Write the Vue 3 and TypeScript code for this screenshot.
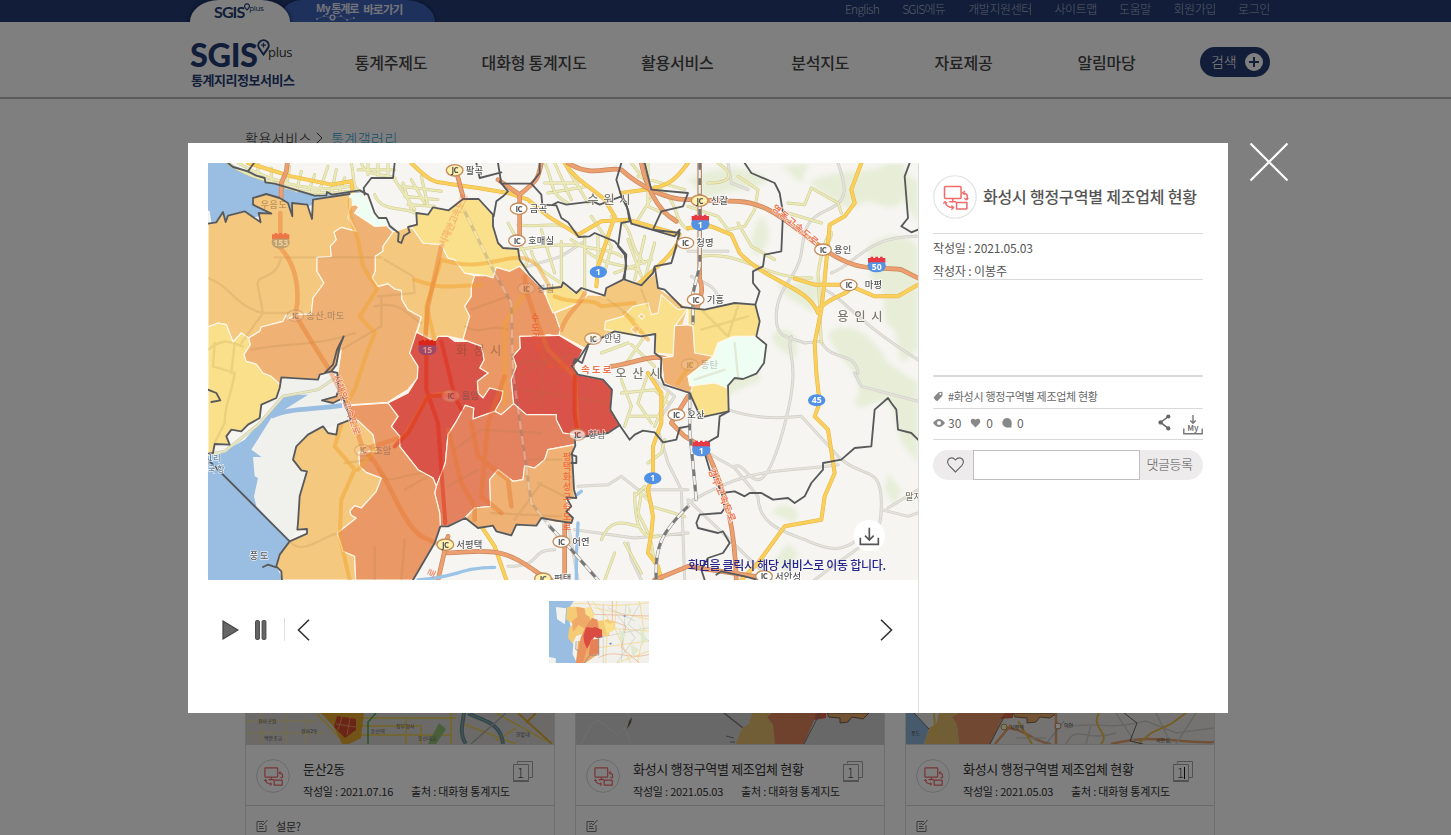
<script setup lang="ts">
interface Card { title: string; date: string; note: string; kind: number; caret: boolean }
interface Place { x: number; y: number; tag: string; name: string; o: number }
interface Shape { c: string; d: string }

const topMenu = [
  { t: 'English', w: 35 }, { t: 'SGIS에듀', w: 44 }, { t: '개발지원센터', w: 65 }, { t: '사이트맵', w: 43 },
  { t: '도움말', w: 32 }, { t: '회원가입', w: 43 }, { t: '로그인', w: 32 },
]
const nav = ['통계주제도', '대화형 통계지도', '활용서비스', '분석지도', '자료제공', '알림마당']
const cards: Card[] = [
  { title: '둔산2동', date: '2021.07.16', note: '설문?', kind: 0, caret: false },
  { title: '화성시 행정구역별 제조업체 현황', date: '2021.05.03', note: '', kind: 1, caret: false },
  { title: '화성시 행정구역별 제조업체 현황', date: '2021.05.03', note: '', kind: 2, caret: true },
]

/* Map drawing units: three per screen pixel. */
const regions: Shape[] = [
  { c: '#f5c87f', d: '0,182 25,178 45,147 53,177 60,158 110,145 158,178 152,150 190,152 135,125 135,105 175,93 215,105 240,120 253,160 252,120 298,125 312,168 315,110 425,93 425,130 420,165 445,205 400,193 378,208 385,230 367,250 370,280 327,283 327,325 348,360 315,405 310,453 265,455 240,468 235,455 225,475 160,492 155,505 122,525 100,510 75,537 55,485 30,480 0,492' },
  { c: '#fae08a', d: '0,492 30,480 55,485 75,537 100,510 122,525 127,545 108,575 115,595 145,603 165,630 190,640 215,665 217,675 205,705 160,725 155,765 120,785 100,805 70,800 55,820 65,845 20,843 15,870 0,872' },
  { c: '#efb174', d: '445,205 425,165 422,145 430,128 445,125 452,132 440,150 500,190 535,187 555,207 525,250 525,265 502,280 502,325 493,345 510,370 540,362 560,378 580,382 582,410 600,440 640,462 625,508 620,545 605,570 630,610 628,645 600,680 575,695 540,718 435,725 420,728 405,705 375,720 342,712 385,700 392,680 388,640 400,560 385,605 370,625 335,635 330,650 220,643 217,665 190,640 165,630 145,603 115,595 108,575 127,545 122,525 155,505 160,492 225,475 235,455 240,468 265,455 310,453 315,405 348,360 327,325 327,283 370,280 367,250 385,230 378,208 400,193' },
  { c: '#f5c87f', d: '555,207 600,192 615,197 645,240 700,245 720,285 740,290 770,330 800,338 790,370 790,400 770,430 785,460 765,530 720,520 700,520 680,535 628,508 640,462 600,440 582,410 580,382 560,378 540,362 510,370 493,345 502,325 502,280 525,265 525,250' },
  { c: '#fae08a', d: '608,187 627,180 625,150 660,155 675,133 722,142 765,108 812,108 855,155 855,190 870,240 885,255 930,258 935,290 955,320 935,310 905,325 865,313 855,345 835,338 770,330 740,290 720,285 700,245 645,240 615,197' },
  { c: '#ea9866', d: '800,338 835,338 855,345 865,313 905,325 935,310 960,335 1000,375 1020,410 1040,450 1057,500 1053,520 1020,515 990,522 935,520 937,555 915,580 925,610 910,650 917,722 880,755 860,745 885,685 845,675 825,705 810,690 808,655 840,630 815,615 828,590 820,550 780,535 765,530 785,460 770,430 790,400 790,370' },
  { c: '#f5c87f', d: '1040,450 1100,425 1140,395 1190,398 1195,375 1245,350 1300,367 1340,330 1350,375 1440,435 1420,500 1395,580 1340,570 1345,515 1300,520 1220,505 1130,555 1053,515 1057,500' },
  { c: '#fae08a', d: '1010,380 1065,360 1100,390 1120,375 1140,395 1100,425 1035,450 1018,410' },
  { c: '#fae08a', d: '1192,475 1245,460 1275,430 1320,420 1330,455 1350,450 1360,395 1410,440 1440,435 1400,490 1398,575 1342,570 1342,513 1290,515 1260,518 1230,505 1190,500' },
  { c: '#f5c87f', d: '1268,500 1282,487 1295,495 1285,515' },
  { c: '#f5c87f', d: '1292,460 1300,452 1310,460 1302,468' },
  { c: '#efb174', d: '1400,488 1455,485 1460,550 1515,580 1440,640 1455,680 1440,690 1368,660 1360,585 1395,580' },
  { c: '#fae08a', d: '1440,432 1490,440 1580,420 1642,425 1655,475 1645,520 1575,520 1530,540 1515,580 1460,570 1455,490 1440,485' },
  { c: '#effef3', d: '1645,520 1675,545 1668,600 1645,632 1605,648 1580,645 1560,668 1560,680 1445,668 1440,640 1515,585 1530,540 1575,522' },
  { c: '#fae08a', d: '1455,668 1520,660 1558,675 1562,745 1478,763 1445,695' },
  { c: '#effef3', d: '425,93 460,90 485,120 500,150 535,165 545,187 500,190 440,150 453,132 440,122 427,130' },
  { c: '#da5348', d: '625,508 680,535 690,520 720,520 740,535 780,535 820,550 828,590 815,615 840,630 808,655 810,690 825,705 845,675 885,685 880,710 860,745 795,768 797,735 772,727 745,775 720,815 712,900 685,970 675,945 630,920 575,850 575,820 550,790 570,760 540,720 600,690 628,645 630,610 605,570' },
  { c: '#da5348', d: '935,520 1053,517 1125,560 1110,590 1092,610 1110,635 1185,650 1212,680 1207,740 1235,787 1200,810 1110,825 1097,832 1100,815 1065,810 1045,770 1045,755 955,755 917,722 910,650 925,610 915,580 937,555' },
  { c: '#e48260', d: '720,815 745,775 772,727 797,735 795,768 860,745 880,755 917,722 955,755 1045,755 1045,770 1065,810 1100,815 1100,845 1020,860 1010,890 980,915 950,908 945,950 915,955 870,920 845,950 848,1030 800,1035 770,1065 720,1090 697,1090 695,1050 680,990 685,970 712,900' },
  { c: '#efb174', d: '1100,845 1020,860 1010,890 980,915 950,908 945,950 915,955 870,920 845,950 848,1030 800,1035 772,1065 810,1095 855,1088 865,1105 910,1117 925,1085 985,1088 1000,1065 1040,1078 1090,1080 1095,1065 1080,1045 1075,1005 1100,1010 1098,980 1092,880' },
  { c: '#f5c87f', d: '425,772 450,772 495,815 505,865 453,868 455,910 475,928 520,945 505,985 460,1035 440,1028 425,1045 430,1057 445,1065 388,1110 405,1165 440,1180 443,1251 222,1251 220,1225 205,1210 215,1175 245,1135 297,1112 297,1098 268,1100 270,1080 275,1000 297,925 280,922 255,890 265,850 300,815 345,790 360,810 385,815 390,785' },
  { c: '#ea9866', d: '420,728 540,720 570,760 550,790 575,820 575,850 630,920 675,945 685,970 680,990 695,1050 697,1090 680,1140 615,1251 443,1251 440,1180 405,1165 388,1110 445,1065 430,1057 425,1045 440,1028 460,1035 505,985 520,945 475,928 455,910 453,868 505,865 495,815 450,772 428,770' },
]
/* County boundary strokes */
const borders = [
  'M60 0L75 12L120 25L145 38L170 45L172 58L200 62L320 98L355 97L357 87L372 95L455 82L480 95L500 150L512 165L535 165L545 188L572 210L570 235L580 240L588 218L605 208L600 192L627 185L625 150L660 155L675 133L722 142L765 108L812 108L855 155L855 190L870 240L885 255L930 258L935 290L965 335L1005 378L1060 372L1065 358L1105 390L1120 375L1190 398L1195 375L1245 350L1255 310L1250 275L1230 250L1240 180L1265 175L1255 120L1240 100L1175 125L1155 115L1075 125L1050 117L1035 125',
  'M0 182L25 178L45 147L53 177L60 158L110 145L158 178L152 150L190 152L135 125L135 105L175 93L215 105L240 120L253 160L252 120L298 125L312 168L315 110L425 93',
  'M120 25L138 0M490 45L555 45L560 0M490 45L467 75L470 95M870 0L880 62L970 62L995 30L995 0M875 55L900 85L885 100L865 115L857 160M805 0L815 45L880 28M970 62L1000 95L1003 125L1045 127L1060 165L1080 178L1112 222L1145 220L1160 210L1220 235L1255 275L1250 350L1300 367L1335 330L1340 310L1390 300L1415 210L1335 200L1360 145L1425 130L1440 90L1330 80L1310 0M1240 0L1225 50L1240 100L1260 140L1270 182L1400 220L1415 200L1405 250L1390 300M1340 310L1350 375L1370 380L1420 430',
  'M1420 432L1490 440L1580 420L1642 425L1655 475L1645 520L1675 545L1668 600L1645 632L1605 648L1580 645L1560 668L1562 745L1478 763L1445 690L1368 665L1358 640L1360 585L1340 570L1342 513L1300 520L1220 505L1140 545L1110 590L1092 610L1110 635L1185 650L1212 680L1207 740L1235 787',
  'M1092 610L1102 588L1122 600L1140 550M1235 787L1200 810L1100 825L1102 848L1090 875L1105 880L1105 900L1090 900M1092 870L1098 980L1105 1005L1075 1003L1090 1030L1075 1045L1095 1065L1090 1080L1040 1072L1000 1065L985 1088L925 1085L910 1117L865 1105L855 1088L810 1095L772 1065L720 1090L697 1090L680 1140L615 1251',
  'M1235 787L1265 830L1280 815L1305 803L1340 808L1365 838L1405 830L1415 795L1440 790',
  'M1610 0L1630 30L1700 60L1715 90L1725 150L1720 265L1670 275L1665 310L1635 325L1635 360L1655 385L1642 425',
  'M1562 745L1535 760L1530 820L1495 840L1490 870L1505 920L1540 985L1550 1035L1540 1050L1475 1055L1465 1080L1470 1095L1530 1110L1545 1105L1565 1140L1545 1170L1500 1185L1480 1220L1490 1251M1540 990L1580 985L1610 1000L1625 990L1660 990L1695 1010L1740 1005L1760 1020L1790 1000L1810 960L1845 920L1845 900L1900 890L1940 855L1990 850L2000 740L2040 705L2050 720L2065 740L2070 800L2110 810L2130 830',
  'M1525 1235L1540 1225L1610 1240L1650 1251M2130 200L2110 208L2080 190L2100 165L2090 40L2105 0',
  'M342 712L385 700L392 680L388 630L370 625L335 635L330 650L220 643L215 675L205 705L160 725L155 765L120 785L100 805L70 800L55 820L65 845L20 843L15 870L0 872M342 712L375 720L405 705L428 770L390 785L385 815L360 810L345 790L300 815L265 850L255 890L280 922L297 925L275 1000L270 1080L268 1100L297 1098L297 1112L245 1135L215 1175L205 1210L220 1225L222 1251M205 1213L180 1205L165 1212M0 680L25 690L37 712L10 717M0 890L245 1135M370 625L385 605L395 550L407 520L387 560L375 605L350 630',
]
const palegreen = [
  'M1440 50C1520 0 1640 10 1680 50C1640 90 1560 70 1500 110Z', 'M1800 60C1880 10 1990 40 2040 0L2090 0L2080 120C2030 160 2000 90 1950 130C1890 150 1860 90 1800 60Z',
  'M1980 250C2050 190 2130 230 2130 260V560L2080 600L2060 500C2000 480 2060 380 1990 350Z', 'M1860 510C1920 460 2000 520 2040 600L2130 660V900L2080 840L2050 720C1990 700 1960 760 1940 720C1990 630 1880 600 1860 510Z',
  'M1490 560C1540 510 1580 600 1640 590L1660 650L1530 710Z', 'M1690 520C1730 470 1790 520 1760 590C1730 560 1710 570 1690 520Z', 'M1700 350C1760 390 1790 330 1850 350L1810 450C1780 410 1740 430 1700 350Z',
  'M1690 1050C1730 1000 1790 1040 1760 1080Z', 'M1700 1190L1740 1140L1770 1170L1740 1230Z', 'M2040 930L2080 980L2060 1030L2030 980Z', 'M1660 160C1700 200 1680 260 1640 280C1620 230 1640 190 1660 160Z', 'M1720 10L1800 0L1780 60Z', 'M2060 0L2130 60V180L2090 120Z',
]
const minor = [
  'M60 0C120 45 200 55 230 70S350 95 425 85M90 0C180 50 300 95 430 70M150 0V40M190 15V60M245 10L235 75M280 25L265 85M320 35L300 90M360 10L330 95M385 20L370 90M410 45L395 85M430 0C440 40 430 80 460 85M460 0C470 40 520 30 560 45M480 0V35M510 0V40M540 0V35M450 20H560M500 95C520 150 590 130 620 150M560 50L620 140M585 60L610 140M610 50L650 120M640 40L660 130M580 70L700 85M590 100L690 110M600 125L680 130',
  'M900 180L960 290L940 340M930 185C1010 200 1060 160 1110 220M1000 200L1040 330M930 260C1000 250 1060 240 1130 250M1060 235V370M970 265C990 340 1050 340 1080 380M1130 220V390M1090 230C1140 270 1200 250 1240 280M1170 220V300M1130 260C1190 310 1230 300 1290 320M1010 0C1040 60 1020 90 1080 120M1040 0L1090 110M1080 20L1140 120M1010 60H1110M1020 90L1140 70M1150 160L1210 250L1190 330M1210 160C1290 190 1250 240 1310 300M1260 230L1300 340M1310 220L1280 350M1340 240L1310 350M1220 330L1330 290M1270 0L1340 90L1290 170M1320 0V130L1410 170M1290 40L1430 80M1340 70C1420 110 1390 170 1440 200',
  'M1440 130L1530 160L1560 200L1610 190L1640 140L1650 80L1590 40M1530 0C1590 40 1560 60 1500 60M1590 180L1630 250L1700 290M1480 280C1590 260 1680 350 1810 345M1740 120L1790 125L1810 75L1890 120L1900 150M1740 150L1840 180M1860 240C1890 180 1850 200 1830 330L1840 540',
  'M1240 650L1270 730L1250 790M1320 630L1290 720L1330 780M1240 690L1340 680L1380 720M1260 760H1360M1380 690L1340 790M1255 600L1310 520M1180 570L1260 540M1270 545L1340 610',
  'M1330 1020L1300 990L1290 1050L1320 1110M1280 1000L1310 970L1330 1030M1320 900L1360 870L1370 830M1180 1130C1210 1060 1250 1080 1290 1090M1330 1030L1430 1060M1250 1140L1300 1230M1330 1140L1340 1200M1280 990C1280 1090 1300 1130 1350 1120M1190 1251L1220 1170',
]
const greyRoads = [
  'M1890 0C1910 60 1930 110 1860 140S1790 200 1780 270S1710 370 1705 450S1740 520 1790 540L1840 535C1870 600 1940 560 1950 630M1440 265H1560M1850 380C1900 400 1950 480 2130 590M1870 330C1950 300 1970 220 2130 220M1750 520C1730 580 1790 580 1720 820S1620 890 1580 910M1560 740C1620 760 1680 770 1780 760L1890 880C1960 950 2020 900 2020 1020S2000 1110 1820 1251M1500 870L1580 915L1650 1000C1650 1090 1740 1110 1790 1130S1900 1190 1980 1100M1440 1020C1640 900 1740 930 1890 905M1440 1010L1690 1251M2020 1040L2100 1060L2130 1050M2040 1035L2130 980M1940 630L1960 670L2130 715',
  'M1110 970L1200 965L1240 940L1290 980H1440M1100 1100L1280 1125L1440 1110M1350 800L1380 900L1420 980L1430 1251M1340 650L1400 700L1360 760M900 1210C1010 1210 960 1160 1040 1160M1260 1140L1270 1190L1300 1251M1110 1251L1080 1080M960 310L1060 280L1130 235M1450 340C1490 360 1540 370 1530 430M1560 0L1570 60L1620 80',
]
const yellowRoads = [
  'M120 0L250 40L370 65L430 55L435 95M610 0C680 70 690 55 720 62L810 75L900 90L960 110L1020 160L1110 215L1180 175L1260 170L1330 190L1415 215M1070 0C1100 50 1160 80 1190 110L1220 160L1170 310L1165 370M1240 90L1310 80C1390 70 1410 40 1440 0M1415 230C1390 280 1350 310 1260 390',
  'M1440 195L1510 190L1570 215L1595 270C1680 360 1800 370 1830 450M1960 0L1930 80L1940 120L1910 160L1865 185L1850 350L1840 440L1820 540L1825 630L1835 720L1820 760L1860 800L1880 930L1850 1000L1840 1070L1730 1090L1650 1200L1600 1251M1760 347L1820 365H1900M1830 440C1880 390 1920 400 1930 370L2000 400L2070 400L2130 365',
  'M1320 630L1360 690V780L1335 850V930L1320 980L1335 1060L1330 1110L1320 1170L1350 1210L1360 1251M800 1060L860 1150L895 1251',
]
const orangeRoads = [
  'M238 0L235 25L220 60L217 230', 'M745 25L765 100M870 50L935 95V235M935 95C990 50 990 50 1000 0M1080 0C1150 45 1200 10 1240 20C1290 65 1370 110 1440 110L1590 115C1690 120 1750 190 1850 260S2000 310 2080 320L2130 345',
  'M1475 0V350C1500 400 1440 450 1465 520M1300 0C1310 50 1340 140 1405 175M1440 700L1390 780L1430 820L1495 860C1560 1000 1580 1100 1585 1251M1210 610C1280 600 1340 570 1380 590L1440 605',
  'M720 1170C870 1160 890 1160 990 1230L1030 1251M1070 1251V1080M690 1251L720 1120M1340 1251L1440 1210L1640 1240',
]
/* Roads showing through the shaded districts */
const innerYellow = [
  'M425 110L427 165L450 230L465 310L507 378L455 460L500 510L480 560L440 680L420 715M620 350C700 380 720 370 820 365M700 290L655 430V510M700 290C850 340 920 240 990 310L1030 380M655 430L680 530M1040 400C1110 430 1150 400 1180 430L1280 420M950 390L890 480L890 720M400 785L380 850L440 920L400 1010L395 1120L425 1251M450 920L500 860M1250 450L1320 530M1450 600L1410 660',
]
const innerOrange = ['M217 150V255C250 290 272 340 268 420L262 455L310 535L370 630L430 750L465 860C540 920 570 1070 640 1120L690 1143M700 250L660 430L650 540M950 340L955 385L980 460L1020 560L1100 640L1110 810M1130 390C1110 440 1080 440 1060 500M465 860L590 820L660 700L720 690M880 1050L820 1000L840 780L890 640M720 800L760 960L800 1030V1070M790 780L810 880L900 950L910 1030']
const innerRed = ['M655 535V680L690 780L700 920L712 1080M700 535L740 700L760 740M560 850L600 810L660 700L740 695M1100 640V750L1110 815']
const innerPale = ['M200 283H520M220 283C200 360 140 330 150 370L165 450L100 540M0 345C70 370 80 430 165 450H260M510 400L620 390L615 340L530 290M500 430C580 410 600 460 640 480M520 400V490L400 560M0 560C50 520 70 540 105 550M20 540L15 610L80 630M80 540L70 630M130 560C230 540 330 550 440 510M80 630C70 700 50 720 50 780L20 840M770 490C820 520 850 480 900 500M790 440L900 400M930 650C970 600 1040 580 1060 620M1010 530L1000 750M960 720L1050 650M740 860L820 800L1000 810M720 970L810 920M960 890H1060M990 960L1070 1000M850 1050L1060 1060M920 1070L1000 960M590 980L660 940M510 920C550 980 560 930 660 930M250 1140C290 1180 350 1110 400 1110M500 1150V1251M590 1130L580 1251M410 900L490 890M930 600L1100 580M940 680L1080 700M1080 700L1200 720M1480 440L1560 520M1590 430L1560 520M1480 500L1620 460M1200 410L1280 470M1300 380L1320 430M1460 650L1550 620M1580 540L1590 640']
const rails = [
  { d: 'M770 145L860 330L910 420L915 630L970 1020L1025 1090', o: 0.28 },
  { d: 'M1025 1090L1090 1160L1170 1251', o: 1 },
  { d: 'M1475 0V310L1455 390V480', o: 1 },
  { d: 'M1445 690V800L1465 1010M1440 1030C1360 1110 1340 1150 1345 1251', o: 1 },
]
const places: Place[] = [
  { x: 740, y: 22, tag: 'JC', name: '팔곡', o: 1 }, { x: 932, y: 137, tag: 'IC', name: '금곡', o: 1 }, { x: 927, y: 233, tag: 'IC', name: '호매실', o: 1 },
  { x: 955, y: 377, tag: 'IC', name: '봉담', o: 0.4 }, { x: 1155, y: 527, tag: 'IC', name: '안녕', o: 0.8 }, { x: 1475, y: 113, tag: 'JC', name: '신갈', o: 1 },
  { x: 1432, y: 240, tag: 'IC', name: '청명', o: 1 }, { x: 1845, y: 260, tag: 'IC', name: '용인', o: 1 }, { x: 1922, y: 366, tag: 'IC', name: '마평', o: 1 },
  { x: 1463, y: 410, tag: 'IC', name: '기흥', o: 1 }, { x: 262, y: 458, tag: 'IC', name: '송산.마도', o: 0.4 }, { x: 1445, y: 605, tag: 'IC', name: '동탄', o: 0.3 },
  { x: 465, y: 862, tag: 'IC', name: '조암', o: 0.4 }, { x: 728, y: 699, tag: 'IC', name: '율암', o: 0.5 }, { x: 1108, y: 815, tag: 'IC', name: '향남', o: 0.65 },
  { x: 1405, y: 755, tag: 'IC', name: '오산', o: 1 }, { x: 712, y: 1145, tag: 'JC', name: '서평택', o: 1 }, { x: 1060, y: 1136, tag: 'IC', name: '어연', o: 1 },
  { x: 1005, y: 1247, tag: 'JC', name: '평택', o: 1 }, { x: 1668, y: 1240, tag: 'IC', name: '서안성', o: 1 },
]
const nameGap = (p: Place) => (p.name === '마평' ? 48 : 33)
const nameLength = (p: Place) => (p.name === '송산.마도' ? 114 : p.name.length * 26)
const ovals = [{ x: 1171, y: 327, n: '1' }, { x: 1334, y: 946, n: '1' }, { x: 1826, y: 712, n: '45' }]
const shields = [
  { x: 218, y: 235, n: '153', a: '#ee7546', b: '#c0a06f', t: '#efd0a0' }, { x: 658, y: 555, n: '15', a: '#dc2418', b: '#9c4868', t: '#e3948e' },
  { x: 1477, y: 180, n: '1', a: '#e63946', b: '#5592e4', t: '#fff' }, { x: 2006, y: 306, n: '50', a: '#e63946', b: '#5592e4', t: '#fff' }, { x: 1480, y: 858, n: '1', a: '#e63946', b: '#5592e4', t: '#fff' },
]
</script>

<template>
  <div class="screen">
    <svg class="defs" width="0" height="0" aria-hidden="true">
      <defs>
        <symbol id="device" viewBox="0 0 34 34">
          <g fill="none" stroke="#f06b6b" stroke-width="1.2">
            <rect x="8.9" y="8.9" width="12.8" height="9.3" rx=".8" /><path d="M12.5 20.6H18M15.3 18.2V20.6" />
            <rect x="18.2" y="21.2" width="8" height="5" rx=".3" />
            <path d="M23.2 13.7C26.6 14.2 27.3 16.5 25.9 19M9.4 20.7C9.7 23.6 11.5 25 15.6 25.2" />
            <path d="M24.7 12.3L22.9 13.7L24.5 15.4M24.1 18L25.8 19.3L27.3 17.8M14.2 23.6L15.9 25.2L14.2 26.8M8 22L9.3 20.5L10.9 21.8" stroke-width="1" />
          </g>
        </symbol>
      </defs>
    </svg>

    <div class="page">
      <div class="topbar">
        <div class="wrap">
          <div class="tabs">
            <div class="tab white"><b>SGIS</b><svg width="6" height="8" viewBox="0 0 8 10"><path d="M4 9L1.2 5.5A3.2 3.2 0 1 1 6.8 5.5Z" fill="none" stroke="#223a72" stroke-width="1.5" /></svg><i>plus</i></div>
            <div class="tab blue">
              <em>My</em><strong>통계로</strong><span>바로가기</span>
              <svg class="dots" width="40" height="7" viewBox="0 0 40 7"><path d="M1 5L8 2L16 4L25 2L31 6L38 4" fill="none" stroke="#9fb2de" stroke-width=".6" /><g fill="#c8d2ee"><circle cx="1" cy="5" r="1" /><circle cx="8" cy="2" r="1" /><circle cx="25" cy="2" r="1" /><circle cx="31" cy="6" r="1" /><circle cx="38" cy="4" r="1" /></g><circle cx="16.5" cy="3.5" r="2.4" fill="none" stroke="#e3e8f5" stroke-width="1.4" /></svg>
            </div>
          </div>
          <div class="topmenu"><a v-for="m in topMenu" :key="m.t" :style="{ width: m.w + 'px' }">{{ m.t }}</a></div>
        </div>
      </div>
      <header class="header">
        <div class="wrap">
          <div class="logo">
            <div class="mark"><b>SGIS</b><svg width="13" height="17" viewBox="0 0 13 17"><path d="M6.5 15.5L2.2 9.4A5.2 5.2 0 1 1 10.8 9.4Z" fill="none" stroke="#223a72" stroke-width="2" /><path d="M6.5 3.8V8.6M4.1 6.2H8.9" stroke="#223a72" stroke-width="1.3" /></svg><i>plus</i></div>
            <div class="sub">통계지리정보서비스</div>
          </div>
          <nav class="nav"><a v-for="n in nav" :key="n">{{ n }}</a></nav>
          <button class="search"><span>검색</span><svg width="18" height="18" viewBox="0 0 18 18"><circle cx="9" cy="9" r="9" fill="#fff" /><path d="M9 4V14M4 9H14" stroke="#223a72" stroke-width="2" /></svg></button>
        </div>
      </header>
      <main class="content">
        <div class="crumb"><span>활용서비스</span><svg width="7" height="12" viewBox="0 0 7 12"><path d="M.8.8L6 6L.8 11.2" fill="none" stroke="#444" /></svg><span class="here">통계갤러리</span></div>
        <div class="cards">
          <article v-for="(c, i) in cards" :key="i" class="card">
            <svg v-if="c.kind === 0" class="strip" viewBox="0 0 308 31">
              <rect width="308" height="31" fill="#d8d5d0" />
              <path d="M0 8H70M0 20H80M15 0V31M40 0V31M60 5V31" stroke="#e5d9a0" stroke-width="1.5" />
              <g fill="none" stroke="#e5cf68" stroke-width="2"><path d="M70 0L100 31M115 5H210M115 22H205M115 13H175V31M160 5V31M205 0V31M250 0L300 28M215 10L270 31M270 15L250 28" /></g>
              <path d="M75 0H118L115 25L103 31H96L88 14Z" fill="#e4a832" /><path d="M91 3L110 6V17L99 25L88 14Z" fill="#d64b2e" /><path d="M96 4L92 17M104 5L101 22M90 11L110 14" stroke="#efad68" stroke-width=".8" />
              <path d="M130 0L122 9V31" fill="none" stroke="#4eab55" stroke-width="1.5" /><path d="M193 10L200 16L190 31H182Z" fill="#92bd74" />
              <path d="M220 31C212 20 218 5 218 0M222 0C235 8 255 8 257 31" fill="none" stroke="#648caf" stroke-width="4" /><path d="M220 31C212 20 218 5 218 0M222 0C235 8 255 8 257 31" fill="none" stroke="#9ab968" stroke-width="1" />
              <path d="M225 31L260 0" stroke="#aaa" stroke-width="1.5" /><path d="M272 0L306 31M280 10L290 0" stroke="#dcaa35" stroke-width="2" />
              <g fill="#555" font-size="5"><text x="12" y="10">갈마공원</text><text x="55" y="20">갈마2동</text><text x="18" y="27">백운초교</text><text x="125" y="20">둔산역</text><text x="150" y="15">정부청사</text><text x="172" y="27">둔산대교</text><text x="270" y="23">한밭대</text></g>
            </svg>
            <svg v-else-if="c.kind === 1" class="strip" viewBox="0 0 308 31">
              <rect width="308" height="31" fill="#d1d1d1" /><path d="M5 31L15 12L22 7L42 22L48 14L55 30M50 0L54 4" fill="none" stroke="#dedede" />
              <path d="M53 8L56 4L55 10L51 16" fill="#6b5a4c" /><path d="M148 0L167 15" stroke="#777" stroke-width="1.5" />
              <path d="M176 0L173 11L166 15L160 31H199L197 12L191 4L196 0Z" fill="#e5bd6c" /><path d="M196 0L191 4L197 12L199 31H228L239 5L243 0Z" fill="#df855a" /><path d="M240 0L238 7L250 5V0Z" fill="#d86549" /><path d="M251 0L253 4L264 5V10L272 9L276 4L287 6L293 0Z" fill="#e5a666" stroke="#715b4a" />
              <path d="M228 31L244 0M150 23L158 25M154 29H159" stroke="#777" />
            </svg>
            <svg v-else class="strip" viewBox="0 0 308 31">
              <rect width="308" height="31" fill="#e9e7e3" /><path d="M0 0H8L23 16L18 31H0Z" fill="#8db4d8" />
              <path d="M33 0L30 11L23 15L18 31H53L51 12L46 4L53 0Z" fill="#e5bd6c" /><path d="M53 0L46 4L51 12L53 31H84L96 6L99 0Z" fill="#e29165" /><path d="M99 0L94 6L107 5V0Z" fill="#d86549" /><path d="M107 0L109 4L121 5V10L130 9L134 4L144 5L151 0Z" fill="#e5a666" stroke="#7f6549" />
              <path d="M8 0L23 16M84 31L98 4" stroke="#666" />
              <g fill="none" stroke="#e0a06d" stroke-width="2.5"><path d="M96 15C120 14 125 29 145 31M89 31L105 12M150 0V31M205 31C250 20 270 31 308 29" /></g><g fill="none" stroke="#cccbc2" stroke-width="1.5"><path d="M160 14C190 8 200 18 240 8L270 20L308 15M210 0L230 31M110 25H140M180 31L185 12M250 0L265 31M290 0L270 31M160 31C170 10 180 30 210 20" /></g>
              <g fill="none" stroke="#e7bd4b" stroke-width="2"><path d="M112 8L126 31M193 0C184 15 205 20 195 31M280 0L265 11L245 20L232 31M28 0L30 31" /></g><path d="M218 0L231 10L224 28L237 31" fill="none" stroke="#666" /><path d="M140 31L158 8" stroke="#8bb3d4" />
              <g fill="#444" font-size="5"><text x="104" y="16">서평택</text><text x="158" y="14">어연</text><text x="250" y="29">서안성</text><text x="5" y="22">풍도</text></g><circle cx="98" cy="14" r="3" fill="#fff3bc" stroke="#aa8c5c" /><circle cx="152" cy="13" r="3" fill="#fff" stroke="#c98054" />
            </svg>
            <div class="info">
              <svg class="round" width="34" height="34"><circle cx="17" cy="17" r="16.4" fill="none" stroke="#d6d6d6" /><use href="#device" width="34" height="34" /></svg>
              <div class="texts"><h3>{{ c.title }}</h3><p><span>작성일 : {{ c.date }}</span><span>출처 : 대화형 통계지도</span></p></div>
              <svg class="pages" width="22" height="23" viewBox="0 0 22 23"><path d="M5.5 3.5V1.5H20.5V17.5H17M1.5 4.5H16.5V20.5H1.5Z" fill="none" stroke="#a3a3a3" /><path d="M1 21.5H17" stroke="#a3a3a3" /><text x="8.5" y="17.5" text-anchor="middle" font-size="13" font-weight="300" fill="#555">1</text><path v-if="c.caret" d="M12.5 7V19" stroke="#111" /></svg>
            </div>
            <div class="note"><svg width="12" height="14" viewBox="0 0 12 14"><path d="M8 2.5H1V12.5H10V6M3 5H5M3 7.5H7M3 9.5H8M5 4L7 6L11.5 1" fill="none" stroke="#777" /></svg><span>{{ c.note }}</span></div>
          </article>
        </div>
      </main>
    </div>

    <div class="dim">
      <section class="modal">
        <div class="viewer">
          <svg class="map" viewBox="0 0 2130 1251">
            <defs><filter id="soft"><feGaussianBlur stdDeviation="8" /></filter></defs>
            <rect width="2130" height="1251" fill="#f6f5f2" />
            <g fill="#e2ebcf" opacity=".75" filter="url(#soft)"><path v-for="(d, i) in palegreen" :key="i" :d="d" /></g>
            <path d="M0 0H60L120 25L170 48L320 98L460 84L500 150L545 187L575 215L535 190L495 175L455 115L425 93L300 130L0 190Z" fill="#99bee1" />
            <path d="M0 143V180L10 178L5 143Z" fill="#f2f2ee" />
            <path d="M215 640L330 655L375 630L395 690L345 708L405 705L425 770L390 785L300 815L255 890L297 925L270 1100L245 1133L140 1030L138 950L132 860L190 765L210 720L160 725Z" fill="#f0f0ed" />
            <path d="M0 875L40 870L110 830L230 695H300L190 765L130 860L160 882H135L140 940L150 945L138 1000L145 1030L245 1135L205 1210L225 1251H0ZM0 665L25 690L37 712L0 725Z" fill="#99bee1" />
            <path d="M0 875L50 865L150 785L225 700L330 680L390 640" fill="none" stroke="#cbc9a4" stroke-width="9" />
            <path d="M0 875L50 865L150 785L225 700L330 680L390 640" fill="none" stroke="#e6e5c6" stroke-width="6" />
            <path d="M190 760C240 735 320 740 402 727" fill="none" stroke="#99bee1" stroke-width="14" />
            <g fill="none" stroke-linejoin="round" stroke-linecap="round">
              <g stroke="#d0cfc7" stroke-width="9"><path v-for="(d, i) in greyRoads" :key="i" :d="d" /></g>
              <g stroke="#e4e2da" stroke-width="5"><path v-for="(d, i) in greyRoads" :key="i" :d="d" /></g>
              <g stroke="#cfcb91" stroke-width="9"><path v-for="(d, i) in minor" :key="i" :d="d" /></g>
              <g stroke="#ebe9b8" stroke-width="6"><path v-for="(d, i) in minor" :key="i" :d="d" /></g>
              <g stroke="#e7b445" stroke-width="12"><path v-for="(d, i) in yellowRoads" :key="i" :d="d" /></g>
              <g stroke="#fad05c" stroke-width="9"><path v-for="(d, i) in yellowRoads" :key="i" :d="d" /></g>
              <g stroke="#c9865c" stroke-width="14"><path v-for="(d, i) in orangeRoads" :key="i" :d="d" /></g>
              <g stroke="#ec9f6f" stroke-width="10"><path v-for="(d, i) in orangeRoads" :key="i" :d="d" /></g>
              <path d="M1105 1251V1180L1110 1080M1100 1000L1120 985M630 1251C760 1240 750 1215 860 1213" stroke="#9bc3e6" stroke-width="10" />
            </g>
            <g stroke="#fff8ea" stroke-width="3.5" stroke-linejoin="round"><polygon v-for="(r, i) in regions" :key="i" :points="r.d" :fill="r.c" /></g>
            <g fill="none" stroke-linejoin="round" stroke-linecap="round">
              <g stroke="#9f7b40" stroke-width="7" opacity=".16"><path v-for="(d, i) in innerPale" :key="i" :d="d" /></g>
              <g stroke="#f2a32d" stroke-width="12" opacity=".5"><path v-for="(d, i) in innerYellow" :key="i" :d="d" /></g>
              <g stroke="#e8752b" stroke-width="14" opacity=".42"><path v-for="(d, i) in innerOrange" :key="i" :d="d" /></g>
              <g stroke="#e02610" stroke-width="12" opacity=".45"><path v-for="(d, i) in innerRed" :key="i" :d="d" /></g>
              <g v-for="(r, i) in rails" :key="'r' + i" :opacity="r.o"><path :d="r.d" stroke="#888" stroke-width="10" /><path :d="r.d" stroke="#f3f1ec" stroke-width="7" /><path :d="r.d" stroke="#777" stroke-width="8" stroke-dasharray="20 26" stroke-linecap="butt" /></g>
              <g stroke="#58595b" stroke-width="5.5"><path v-for="(d, i) in borders" :key="i" :d="d" /></g>
            </g>
            <g class="roadname" fill="#ee744e" stroke="#fff" stroke-width="3" paint-order="stroke" font-size="28">
              <text transform="translate(1690 138) rotate(40)" textLength="170">영동고속도로</text><text transform="translate(1500 922) rotate(67)" textLength="170">경부고속도로</text>
              <text transform="translate(1120 630)" textLength="90">속도로</text><text transform="translate(375 640) rotate(70)" textLength="190" opacity=".7">서해안고속도로</text>
            </g>
            <g class="roadname" fill="#ee552e" font-size="26" opacity=".65">
              <text v-for="(ch, i) in ['수','도','권','제','2','순','환','고']" :key="i" :x="[970,970,972,980,998,1018,1049,1080][i]" :y="[475,505,535,565,590,612,620,624][i]">{{ ch }}</text>
              <text v-for="(ch, i) in ['평','택','화','성','고','속','도','로']" :key="'b' + i" x="1065" :y="892 + i * 30">{{ ch }}</text>
              <text transform="translate(710 250) rotate(-65)" opacity=".5">서해안고속도로</text><text transform="translate(675 1245) rotate(-65)">로</text>
            </g>
            <g class="city"><text x="1138" y="124" textLength="130">수원시</text><text x="1888" y="475" textLength="136">용인시</text><text x="1222" y="646" textLength="136">오산시</text><text x="744" y="575" textLength="136" class="under">화성시</text><text x="158" y="136" textLength="78" class="under" font-size="27">우음도</text><text x="125" y="1188" textLength="56" font-size="27" fill="#555">풍도</text><text x="2092" y="1012" font-size="27">말지</text><text x="0" y="895" textLength="38" font-size="25" fill="#62839f">1리</text><text x="0" y="928" textLength="50" font-size="25" fill="#62839f">국항</text></g>
            <g v-for="(p, i) in places" :key="'p' + i" class="place" :class="{ faint: p.o < .6 }" :opacity="p.o">
              <ellipse :cx="p.x" :cy="p.y" rx="25" ry="17" :fill="p.tag === 'JC' ? '#fff2ae' : '#fff'" :fill-opacity="p.o < .6 ? .4 : 1" stroke="#c48b5b" stroke-width="4" />
              <text class="tag" :x="p.x" :y="p.y + 9" text-anchor="middle">{{ p.tag }}</text>
              <text class="nm" :x="p.x + nameGap(p)" :y="p.y + 10" :textLength="nameLength(p)">{{ p.name }}</text>
            </g>
            <g v-for="(o, i) in ovals" :key="'o' + i" class="num"><ellipse :cx="o.x" :cy="o.y" rx="26" ry="18" fill="#4f91e6" /><text :x="o.x" :y="o.y + 9" fill="#fff">{{ o.n }}</text></g>
            <g v-for="(s, i) in shields" :key="'s' + i" class="num"><path :d="`M${s.x - 26} ${s.y - 21}h8v-4h8v4h6v-4h8v4h6v-4h8v4h8v15h-52Z`" :fill="s.a" /><path :d="`M${s.x - 24} ${s.y - 8}h48q8 14 -4 25q-22 10 -40 0q-12 -11 -4 -25Z`" :fill="s.b" /><text :x="s.x" :y="s.y + 15" :fill="s.t">{{ s.n }}</text></g>
            <circle cx="1984" cy="1118" r="47" fill="#fff" /><path d="M1957 1124V1144H2011V1124M1984 1094V1130M1971 1118L1984 1131L1997 1118" fill="none" stroke="#555" stroke-width="5" />
            <text class="hint" x="1440" y="1222" textLength="594">화면을 클릭시 해당 서비스로 이동 합니다.</text>
          </svg>
          <div class="controls">
            <svg width="17" height="20" viewBox="0 0 17 20"><path d="M1 1L16 10L1 19Z" fill="#666" stroke="#444" stroke-width="1.2" /></svg>
            <svg class="pause" width="12" height="20" viewBox="0 0 12 20"><g fill="#666" stroke="#444"><rect x=".6" y=".6" width="3.8" height="18.8" rx="1" /><rect x="7.1" y=".6" width="3.8" height="18.8" rx="1" /></g></svg>
            <i class="bar"></i>
            <svg class="prev" width="13" height="22" viewBox="0 0 13 22"><path d="M12 .8L1.5 11L12 21.2" fill="none" stroke="#333" stroke-width="1.6" /></svg>
            <svg class="thumb" viewBox="0 0 221 186" preserveAspectRatio="none">
              <rect width="221" height="186" fill="#f1f0eb" /><path d="M0 0H55L40 30L50 90L60 186H0Z" fill="#99bee1" /><path d="M15 18L38 22L35 70L18 55ZM55 105L65 112L60 145L62 186L52 160ZM0 186V168L15 172V186Z" fill="#f2f2ee" />
              <g fill="none" stroke="#f5d788" stroke-width="2"><path d="M50 10C90 0 110 25 221 5M95 0L130 50L125 186M100 20L221 55M150 0L145 80L180 186M200 0L210 90L195 186M110 140L221 120M150 186L221 150M110 80L221 90" /></g>
              <g fill="none" stroke="#eba27b" stroke-width="1.5"><path d="M85 0L100 40L221 45M140 0V60L170 75L160 140L200 186M110 170C150 140 170 180 221 160" /></g>
              <g fill="none" stroke="#bfc4b7" stroke-width="1.3"><path d="M120 10V186M150 40L190 110L150 186M170 10L160 180M110 110L221 80M130 20L190 60M200 10L175 70L221 120" /></g>
              <g fill="#dfe9cd"><path d="M175 10L182 30L176 50ZM155 85L170 100L158 130ZM200 70L215 115L205 135ZM180 130L198 145L185 170Z" /></g>
              <path d="M40 18L64 17L80 22L84 45L90 47L108 60L119 58L130 55L145 64L145 82L133 90L133 105L120 105L115 85L95 90L60 105L52 128L42 110L45 80L54 70L38 55Z" fill="#f5cb75" />
              <path d="M82 20L92 18L100 45L92 60L84 45Z" fill="#fae08a" />
              <path d="M60 18L78 22L80 40L90 48L92 75L78 82L65 72L53 92L51 60L63 48ZM64 120H90L108 160L80 186H60Z" fill="#efaa69" /><path d="M95 50L107 56L110 85L82 90L88 120L75 186H59L70 110L80 80Z" fill="#ea925e" />
              <path d="M82 79L97 80L102 78L117 86L118 108L108 112L100 108L94 120L84 143L78 125L76 105Z" fill="#da4b42" /><path d="M92 116L110 113V158L88 162Z" fill="#e58257" /><path d="M119 55L132 68L145 65L142 90L130 95V108" fill="#fae08a" /><path d="M110 104V162L90 163L78 186M60 120L59 145L66 150M119 107L110 110" fill="none" stroke="#777" stroke-width="1.5" />
              <circle cx="167" cy="45" r="2.5" fill="#697fd2" /><circle cx="136" cy="128" r="2.5" fill="#697fd2" />
            </svg>
            <svg class="next" width="13" height="22" viewBox="0 0 13 22"><path d="M1 .8L11.5 11L1 21.2" fill="none" stroke="#333" stroke-width="1.6" /></svg>
          </div>
        </div>
        <aside class="side">
          <div class="head"><svg width="44" height="44" viewBox="0 0 34 34"><circle cx="17" cy="17" r="16.4" fill="none" stroke="#e2e2e2" stroke-width=".9" /><use href="#device" width="34" height="34" /></svg><h2>화성시 행정구역별 제조업체 현황</h2></div>
          <div class="who"><p>작성일 : 2021.05.03</p><p>작성자 : 이봉주</p></div>
          <div class="blank"></div>
          <div class="tags"><svg width="10" height="11" viewBox="0 0 10 11"><path d="M.5 6.5L5.5 1.3L9.3.7L9.5 4.7L4.2 10.2Q2 9.5.5 6.5Z" fill="#888" /><circle cx="7.3" cy="2.9" r="1" fill="#fff" /></svg><span>#화성시 행정구역별 제조업체 현황</span></div>
          <div class="stats">
            <svg width="12" height="8" viewBox="0 0 12 8"><path d="M0 4Q6-3.8 12 4Q6 11.8 0 4Z" fill="#888" /><circle cx="6" cy="4" r="2" fill="#fff" /></svg><span class="n1">30</span>
            <svg width="11" height="10" viewBox="0 0 10 10"><path d="M5 9.5L1 5.5Q-.8 2.6 1.4 1Q3.5 0 5 1.7Q6.5 0 8.6 1Q10.8 2.6 9 5.5Z" fill="#888" /></svg><span class="n2">0</span>
            <svg width="10" height="10" viewBox="0 0 10 10"><circle cx="5" cy="4.8" r="4.7" fill="#888" /><path d="M5 9.5H9.5V5Z" fill="#888" /></svg><span class="n2">0</span>
            <svg class="share" width="13" height="17" viewBox="0 0 13 17"><path d="M10.3 2.5L2.6 8.4L10.3 14.4" fill="none" stroke="#666" stroke-width="1.5" /><g fill="#666"><circle cx="10.3" cy="2.5" r="2.1" /><circle cx="2.6" cy="8.4" r="2.2" /><circle cx="10.3" cy="14.4" r="2.1" /></g></svg>
            <svg class="my" width="20" height="20" viewBox="0 0 20 20"><path d="M.8 13.5V18.7H19.2V13.5M10 0V8M7.3 5.5L10 8.2L12.7 5.5" fill="none" stroke="#777" stroke-width="1.4" /><text x="10" y="16.3" text-anchor="middle" font-size="8" font-weight="bold" fill="#777">My</text></svg>
          </div>
          <div class="reply"><button class="like"><svg width="17" height="16" viewBox="0 0 17 16"><path d="M8.5 15L2 8.3Q-.7 4.6 1.8 2Q5.6-.8 8.5 3Q11.4-.8 15.2 2Q17.7 4.6 15 8.3Z" fill="none" stroke="#666" stroke-width="1.1" /></svg></button><input aria-label="댓글" /><button class="send">댓글등록</button></div>
        </aside>
      </section>
      <svg class="close" width="40" height="40" viewBox="0 0 40 40"><path d="M1.5 1.5L38.5 38.5M38.5 1.5L1.5 38.5" stroke="#fff" stroke-width="2.2" /></svg>
    </div>
  </div>
</template>

<style>
body { margin: 0; overflow: hidden; }
</style>
<style scoped>
* { box-sizing: border-box; }
.screen { position: relative; width: 1451px; height: 835px; overflow: hidden; background: #fff; font-family: "Noto Sans CJK KR", sans-serif; color: #444; }
.page { isolation: isolate; }
.defs { position: absolute; }
svg { display: block; flex: none; }
h2, h3, p { margin: 0; font-weight: 400; }
button { border: 0; padding: 0; font: inherit; }
.wrap { width: 1080px; margin-left: 190px; display: flex; }
.topbar { height: 22px; background: #223a72; overflow: hidden; }
.tabs { display: flex; height: 22px; }
.tab { height: 22px; display: flex; white-space: nowrap; }
.tab.white { width: 100px; background: #fff; border-radius: 34px 34px 0 0 / 26px 26px 0 0; padding: 3px 0 0 24px; color: #223a72; z-index: 1; box-shadow: 0 0 4px #0f1c3c; }
.tab b { font: bold 16px/17px Lato, sans-serif; letter-spacing: -.9px; }
.tab.white i { font: 8px/10px "Open Sans", sans-serif; margin-left: -1px; letter-spacing: -.4px; }
.tab.blue { position: relative; width: 155px; margin-left: -10px; background: #3d62b8; border-radius: 30px 40px 0 0 / 26px 30px 0 0; padding-left: 36px; color: #e3e8f5; line-height: 17px; box-shadow: 0 0 3px #10204a; }
.tab em { font: bold 10px/16px "Open Sans", sans-serif; letter-spacing: -.5px; }
.tab strong { font-size: 11px; letter-spacing: -1.1px; width: 33px; padding-left: 1px; }
.tab.blue span { font-size: 11.5px; line-height: 19px; font-weight: 700; letter-spacing: -.7px; }
.dots { position: absolute; left: 36px; top: 14px; }
.topmenu { margin-left: auto; display: flex; gap: 22px; }
.topmenu a { color: #a9b4cb; font-size: 12px; font-weight: 300; line-height: 18px; letter-spacing: -.4px; white-space: nowrap; text-align: right; }
.topmenu a:nth-child(-n+2) { letter-spacing: -.75px; }
.header { height: 77px; border-bottom: 2px solid #b4b4b4; }
.logo { width: 107px; padding-top: 17px; color: #223a72; }
.mark { display: flex; height: 32px; }
.mark b { font: 900 32.5px/32px Lato, sans-serif; letter-spacing: -.4px; width: 67px; }
.mark i { font: 13px/26px "Open Sans", sans-serif; color: #333; margin-left: -2px; letter-spacing: -.3px; }
.sub { font-size: 13px; font-weight: 700; line-height: 18px; letter-spacing: -.45px; white-space: nowrap; padding-left: 1px; }
.nav { display: flex; margin-left: 22.5px; }
.nav a { width: 143.1px; padding-top: 28px; font-size: 16px; line-height: 24px; font-weight: 500; text-align: center; color: #444; letter-spacing: -.2px; white-space: nowrap; }
.search { margin: 25px 0 0 auto; width: 70px; height: 30px; flex: none; border-radius: 15px; background: #223a72; color: #fff; font-size: 14px; font-weight: 300; display: flex; align-items: center; gap: 8px; padding-left: 11px; letter-spacing: -.1px; }
.search span { line-height: 20px; margin-top: -2px; }
.content { padding: 29px 0 0 245px; }
.crumb { display: flex; align-items: center; font-size: 14px; line-height: 20px; font-weight: 300; letter-spacing: .5px; color: #222; }
.crumb svg { margin: 0 8px 0 4px; }
.crumb .here { color: #2e9fd8; }
.cards { display: grid; grid-template-columns: repeat(3, 310px); gap: 20px; margin-top: 565px; }
.card { height: 130px; border: solid #ddd; border-width: 0 1px; }
.strip { width: 308px; height: 31px; }
.info { height: 62px; border: solid #d4d4d4; border-width: 1px 0; display: flex; padding: 14px 20px 0 10px; }
.texts { margin-left: 13px; }
.texts h3 { font-size: 13px; line-height: 20px; font-weight: 400; letter-spacing: -.33px; color: #333; padding-top: 0; white-space: nowrap; }
.texts p { display: flex; gap: 18px; font-size: 11px; line-height: 18px; padding-top: 3px; letter-spacing: -.2px; white-space: nowrap; color: #333; }
.pages { margin-left: auto; }
.info > .pages { margin-top: 1px; }
.note { display: flex; padding: 13px 0 0 10px; gap: 8px; font-size: 11px; line-height: 15px; letter-spacing: -.2px; }
.dim { position: absolute; inset: 0; background: rgba(0, 0, 0, .5); }
.modal { width: 1040px; height: 570px; margin: 143px 0 0 188px; background: #fff; display: flex; padding: 20px 25px 0 20px; }
.viewer { width: 710px; }
.map { width: 710px; height: 417px; }
.map text { font-family: "Noto Sans CJK KR", sans-serif; }
.place .nm { font-size: 28px; font-weight: 500; fill: #555; stroke: #fff; stroke-width: 4px; paint-order: stroke; }
.place.faint .nm { stroke: none; }
.place .tag { font: bold 24px "Open Sans", sans-serif; letter-spacing: -2px; fill: #555; }
.city { font-size: 37px; font-weight: 500; fill: #7d7a6c; stroke: #fff; stroke-width: 3px; paint-order: stroke; }
.city .under { stroke: none; fill: #7b4d30; opacity: .45; }
.num text { font: bold 26px "Open Sans", sans-serif; text-anchor: middle; }
.roadname { font-weight: 700; }
.map .hint { font-size: 36px; font-weight: 500; fill: #26258c; }
.controls { display: flex; align-items: flex-start; padding: 40px 0 0 14px; }
.pause { margin-left: 16px; }
.bar { width: 1px; height: 23px; background: #ddd; margin: -2px 0 0 17px; }
.prev { margin: -1px 0 0 12px; }
.thumb { width: 100px; height: 62px; margin: -19px 0 0 239px; }
.next { margin: -1px 0 0 231px; }
.side { width: 285px; height: 550px; border-left: 1px solid #ddd; padding-left: 14px; color: #666; }
.head { height: 71px; border-bottom: 1px solid #d9d9d9; display: flex; padding-top: 12px; }
.head h2 { font-size: 16px; line-height: 43px; font-weight: 500; letter-spacing: -.18px; margin-left: 6px; color: #555; white-space: nowrap; }
.who { height: 46px; border-bottom: 1px solid #d9d9d9; padding-top: 2px; font-size: 12px; line-height: 23px; font-weight: 300; letter-spacing: -.12px; color: #555; }
.blank { height: 97px; border-bottom: 2px solid #d9d9d9; }
.tags { height: 32px; border-bottom: 1px solid #d9d9d9; display: flex; align-items: center; padding-top: 7px; gap: 5px; font-size: 11px; letter-spacing: -.31px; white-space: nowrap; }
.stats { height: 31px; border-bottom: 1px solid #d9d9d9; display: flex; align-items: center; font-size: 12px; padding-bottom: 3px; }
.stats span { line-height: 16px; margin-top: 0; }
.stats .n1 { margin: 0 9px 0 3px; }
.stats .n2 { margin: 0 9px 0 5px; }
.share { margin: 0 12px 0 auto; }
.my { margin-top: 4px; }
.reply { display: flex; height: 30px; margin-top: 10px; border-radius: 15px; overflow: hidden; background: #eeebec; }
.like { width: 40px; background: none; padding-left: 14px; }
.reply input { width: 167px; border: 1px solid #bfbfbf; background: #fff; padding: 0; }
.send { background: none; flex: 1; font-size: 13px; font-weight: 300; letter-spacing: -.5px; color: #555; padding: 0 4px 3px 0; white-space: nowrap; }
.close { position: absolute; left: 1249px; top: 142px; }
</style>
